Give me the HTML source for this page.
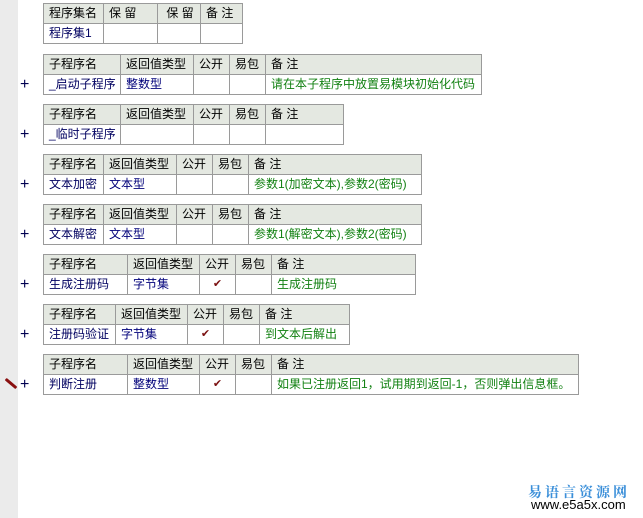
<!DOCTYPE html>
<html><head><meta charset="utf-8"><style>
body{margin:0;width:643px;height:518px;background:#fff;position:relative;overflow:hidden;font-family:"Liberation Sans","Noto Sans CJK SC",sans-serif;font-size:12px;}
.g{position:absolute;left:0;top:0;width:18px;height:518px;background:#ebebeb;}
table{position:absolute;border-collapse:collapse;table-layout:fixed;left:43px;}
td{border:1px solid #9a9a9a;height:19px;padding:0 0 0 5px;white-space:nowrap;overflow:hidden;line-height:19px;color:#000;}
tr.h td{background:#e4e8e1;}
.b{color:#00007a}.n{color:#000060}.gr{color:#118011}
.c{text-align:center;padding:0;color:#7a1010;font-size:11px}
.p{position:absolute;left:20px;font-size:16px;line-height:16px;color:#000050;}
.wm{position:absolute;left:528px;top:482px;color:#3b8fd9;font-family:"Noto Serif CJK SC",serif;font-size:14px;letter-spacing:3px;font-weight:bold}
.wu{position:absolute;left:531px;top:497px;font-size:13px;color:#000;}
</style></head><body>
<div class="g"></div>

<table style="top:3px;width:199px"><colgroup><col width="60"><col width="54"><col width="43"><col width="42"></colgroup>
<tr class="h"><td>程序集名</td><td>保 留</td><td>&nbsp;保 留</td><td>备 注</td></tr>
<tr><td class="n">程序集1</td><td></td><td></td><td></td></tr></table>

<table style="top:54px;width:438px"><colgroup><col width="77"><col width="73"><col width="36"><col width="36"><col width="216"></colgroup>
<tr class="h"><td>子程序名</td><td>返回值类型</td><td>公开</td><td>易包</td><td>备 注</td></tr>
<tr><td class="n">_启动子程序</td><td class="b">整数型</td><td></td><td></td><td class="gr">请在本子程序中放置易模块初始化代码</td></tr></table>
<div class="p" style="top:77px">+</div>

<table style="top:104px;width:300px"><colgroup><col width="77"><col width="73"><col width="36"><col width="36"><col width="78"></colgroup>
<tr class="h"><td>子程序名</td><td>返回值类型</td><td>公开</td><td>易包</td><td>备 注</td></tr>
<tr><td class="n">_临时子程序</td><td></td><td></td><td></td><td></td></tr></table>
<div class="p" style="top:127px">+</div>

<table style="top:154px;width:378px"><colgroup><col width="60"><col width="73"><col width="36"><col width="36"><col width="173"></colgroup>
<tr class="h"><td>子程序名</td><td>返回值类型</td><td>公开</td><td>易包</td><td>备 注</td></tr>
<tr><td class="n">文本加密</td><td class="b">文本型</td><td></td><td></td><td class="gr">参数1(加密文本),参数2(密码)</td></tr></table>
<div class="p" style="top:177px">+</div>

<table style="top:204px;width:378px"><colgroup><col width="60"><col width="73"><col width="36"><col width="36"><col width="173"></colgroup>
<tr class="h"><td>子程序名</td><td>返回值类型</td><td>公开</td><td>易包</td><td>备 注</td></tr>
<tr><td class="n">文本解密</td><td class="b">文本型</td><td></td><td></td><td class="gr">参数1(解密文本),参数2(密码)</td></tr></table>
<div class="p" style="top:227px">+</div>

<table style="top:254px;width:372px"><colgroup><col width="84"><col width="72"><col width="36"><col width="36"><col width="144"></colgroup>
<tr class="h"><td>子程序名</td><td>返回值类型</td><td>公开</td><td>易包</td><td>备 注</td></tr>
<tr><td class="n">生成注册码</td><td class="b">字节集</td><td class="c">✔</td><td></td><td class="gr">生成注册码</td></tr></table>
<div class="p" style="top:277px">+</div>

<table style="top:304px;width:306px"><colgroup><col width="72"><col width="72"><col width="36"><col width="36"><col width="90"></colgroup>
<tr class="h"><td>子程序名</td><td>返回值类型</td><td>公开</td><td>易包</td><td>备 注</td></tr>
<tr><td class="n">注册码验证</td><td class="b">字节集</td><td class="c">✔</td><td></td><td class="gr">到文本后解出</td></tr></table>
<div class="p" style="top:327px">+</div>

<table style="top:354px;width:535px"><colgroup><col width="84"><col width="72"><col width="36"><col width="36"><col width="307"></colgroup>
<tr class="h"><td>子程序名</td><td>返回值类型</td><td>公开</td><td>易包</td><td>备 注</td></tr>
<tr><td class="n">判断注册</td><td class="b">整数型</td><td class="c">✔</td><td></td><td class="gr">如果已注册返回1，试用期到返回-1，否则弹出信息框。</td></tr></table>
<div class="p" style="top:377px">+</div>
<div style="position:absolute;left:4px;top:382px;width:14px;height:3px;background:#8a1010;transform:rotate(40deg);border-radius:1px"></div>

<div class="wm">易语言资源网</div>
<div class="wu">www.e5a5x.com</div>
</body></html>
